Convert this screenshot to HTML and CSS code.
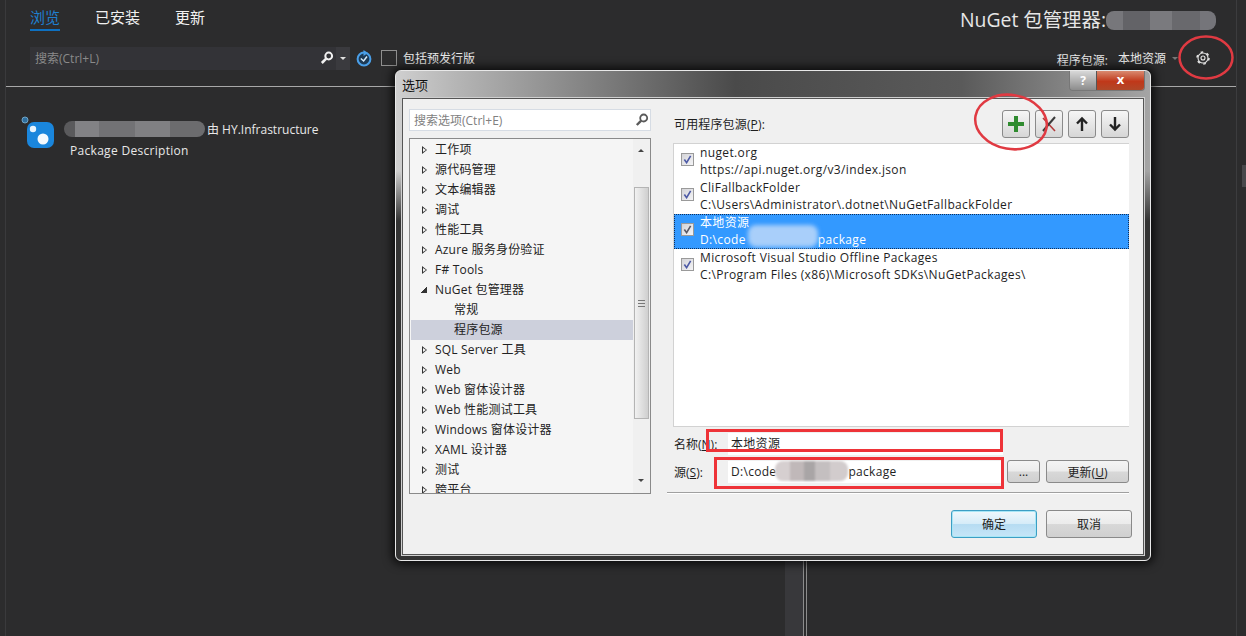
FILE: index.html
```html
<!DOCTYPE html>
<html lang="zh-CN">
<head>
    <meta charset="UTF-8">
    <title>NuGet 包管理器</title>
    <link rel="stylesheet" href="styles.css">
</head>
<body>
    <div class="side-line"></div>
    <div class="right-line"></div>
    <div class="right-thumb"></div>

    <main class="manager">
        <header class="top-row">
            <nav class="tabs">
                <a class="tab active">浏览</a>
                <a class="tab">已安装</a>
                <a class="tab">更新</a>
            </nav>
            <h1 class="title">NuGet 包管理器:<span class="smudge title-smudge"></span></h1>
        </header>

        <div class="toolbar">
            <div class="search">
                <span class="search-hint">搜索(Ctrl+L)</span>
                <svg class="search-icon" width="14" height="14" viewBox="0 0 14 14"><circle cx="8.7" cy="5" r="3.4" fill="none" stroke="#f1f1f1" stroke-width="2"/><path d="M6.2 7.6 1.8 12" stroke="#f1f1f1" stroke-width="2.6"/></svg>
                <span class="search-drop"></span>
            </div>
            <svg class="refresh" width="16" height="18" viewBox="0 0 16 18"><circle cx="8" cy="10" r="6.4" fill="#1d3a55" stroke="#4a9fe8" stroke-width="2"/><path d="M7.500 1 12 4 7.500 7Z" fill="#4a9fe8"/><path d="M4.800 9.500 7.600 12 11 7.500" fill="none" stroke="#d8ecfb" stroke-width="1.500"/></svg>
            <span class="pre-box"></span>
            <span class="pre-label">包括预发行版</span>
            <div class="source-picker">
                <span class="source-label">程序包源:</span>
                <span class="source-value">本地资源</span>
                <span class="source-drop"></span>
                <svg class="gear" width="16" height="16" viewBox="0 0 16 16"><circle cx="8" cy="8" r="5" fill="none" stroke="#e6e6e6" stroke-width="1.100"/><circle cx="8" cy="8" r="6" fill="none" stroke="#e6e6e6" stroke-width="1.500" stroke-dasharray="2.600 3.680"/><circle cx="8" cy="8" r="2" fill="none" stroke="#e6e6e6" stroke-width="1.100"/></svg>
            </div>
        </div>

        <section class="package">
            <svg class="package-icon" width="34" height="34" viewBox="0 0 34 34">
                <circle cx="4" cy="4" r="3" fill="#2f6f9f" stroke="#6fa5c8"/>
                <rect x="6" y="6" width="27" height="26" rx="7" fill="#1a86dc"/>
                <circle cx="12" cy="13" r="3.200" fill="#e8f4fd"/>
                <circle cx="22" cy="23" r="5.500" fill="#f4fafe"/>
            </svg>
            <div class="package-text">
                <div class="package-name"><span class="smudge name-smudge"></span>由 HY.Infrastructure</div>
                <div class="package-desc">Package Description</div>
            </div>
        </section>
    </main>

    <div class="split-bar"></div>

    <div class="dialog">
        <div class="dialog-title">
            <span class="dialog-name">选项</span>
            <div class="window-buttons">
                <span class="help-btn">?</span>
                <span class="close-btn">x</span>
            </div>
        </div>
        <div class="dialog-body">
            <div class="left-pane">
                <div class="option-search">
                    <span>搜索选项(Ctrl+E)</span>
                    <svg width="14" height="14" viewBox="0 0 14 14"><circle cx="8.700" cy="5" r="3.500" fill="none" stroke="#5a5a5a" stroke-width="1.800"/><path d="M6.200 7.600 1.800 12" stroke="#5a5a5a" stroke-width="2.400"/></svg>
                </div>
                <div class="tree">
                    <ul class="tree-list">
                        <li class="tree-row"><i class="arrow"></i>工作项</li>
                        <li class="tree-row"><i class="arrow"></i>源代码管理</li>
                        <li class="tree-row"><i class="arrow"></i>文本编辑器</li>
                        <li class="tree-row"><i class="arrow"></i>调试</li>
                        <li class="tree-row"><i class="arrow"></i>性能工具</li>
                        <li class="tree-row"><i class="arrow"></i>Azure 服务身份验证</li>
                        <li class="tree-row"><i class="arrow"></i>F# Tools</li>
                        <li class="tree-row"><i class="arrow open"></i>NuGet 包管理器</li>
                        <li class="tree-row child">常规</li>
                        <li class="tree-row child selected">程序包源</li>
                        <li class="tree-row"><i class="arrow"></i>SQL Server 工具</li>
                        <li class="tree-row"><i class="arrow"></i>Web</li>
                        <li class="tree-row"><i class="arrow"></i>Web 窗体设计器</li>
                        <li class="tree-row"><i class="arrow"></i>Web 性能测试工具</li>
                        <li class="tree-row"><i class="arrow"></i>Windows 窗体设计器</li>
                        <li class="tree-row"><i class="arrow"></i>XAML 设计器</li>
                        <li class="tree-row"><i class="arrow"></i>测试</li>
                        <li class="tree-row"><i class="arrow"></i>跨平台</li>
                    </ul>
                    <div class="scrollbar">
                        <span class="scroll-up"></span>
                        <span class="scroll-thumb"><b></b></span>
                        <span class="scroll-down"></span>
                    </div>
                </div>
            </div>

            <div class="right-pane">
                <div class="sources-head">
                    <span>可用程序包源(<u>P</u>):</span>
                    <div class="tool-buttons">
                        <button class="tool-btn"><svg width="20" height="20" viewBox="0 0 20 20"><path d="M8 2h4v6h6v4h-6v6H8v-6H2V8h6z" fill="#2f8b2f"/></svg></button>
                        <button class="tool-btn"><svg width="18" height="18" viewBox="0 0 18 18"><path d="M3 3 15 16" stroke="#b23a3a" stroke-width="1.600"/><path d="M15 2 3 16" stroke="#3a3a3a" stroke-width="2"/></svg></button>
                        <button class="tool-btn"><svg width="16" height="18" viewBox="0 0 16 18"><path d="M8 16V4M3 8.500 8 3.500 13 8.500" fill="none" stroke="#222" stroke-width="2.400"/></svg></button>
                        <button class="tool-btn"><svg width="16" height="18" viewBox="0 0 16 18"><path d="M8 2v12M3 9.500 8 14.500 13 9.500" fill="none" stroke="#222" stroke-width="2.400"/></svg></button>
                    </div>
                </div>

                <ul class="source-list">
                    <li class="source-row">
                        <span class="check"><svg width="9" height="9" viewBox="0 0 10 10"><path d="M1.500 5 4 8.500 8.500 1" fill="none" stroke="#4d5aa6" stroke-width="1.800"/></svg></span>
                        <div class="source-text"><div>nuget.org</div><div>https://api.nuget.org/v3/index.json</div></div>
                    </li>
                    <li class="source-row">
                        <span class="check"><svg width="9" height="9" viewBox="0 0 10 10"><path d="M1.500 5 4 8.500 8.500 1" fill="none" stroke="#4d5aa6" stroke-width="1.800"/></svg></span>
                        <div class="source-text"><div>CliFallbackFolder</div><div>C:\Users\Administrator\.dotnet\NuGetFallbackFolder</div></div>
                    </li>
                    <li class="source-row current">
                        <span class="check"><svg width="9" height="9" viewBox="0 0 10 10"><path d="M1.500 5 4 8.500 8.500 1" fill="none" stroke="#5a5a66" stroke-width="1.800"/></svg></span>
                        <div class="source-text"><div>本地资源</div><div class="smudge-line">D:\code<span class="smudge light-smudge"></span>package</div></div>
                    </li>
                    <li class="source-row">
                        <span class="check"><svg width="9" height="9" viewBox="0 0 10 10"><path d="M1.500 5 4 8.500 8.500 1" fill="none" stroke="#4d5aa6" stroke-width="1.800"/></svg></span>
                        <div class="source-text"><div>Microsoft Visual Studio Offline Packages</div><div>C:\Program Files (x86)\Microsoft SDKs\NuGetPackages\</div></div>
                    </li>
                </ul>

                <div class="field-row name-row">
                    <label class="field-label">名称(<u>N</u>):</label>
                    <div class="field-input">本地资源</div>
                </div>
                <div class="field-row">
                    <label class="field-label">源(<u>S</u>):</label>
                    <div class="field-input">D:\code<span class="smudge grey-smudge"></span>package</div>
                    <button class="btn dots-btn">...</button>
                    <button class="btn update-btn">更新(<u>U</u>)</button>
                </div>
                <div class="divider"></div>
                <div class="dialog-actions">
                    <button class="btn action-btn primary">确定</button>
                    <button class="btn action-btn">取消</button>
                </div>
            </div>
        </div>
    </div>

    <!-- red annotations drawn on top of the screenshot -->
    <svg class="marks" width="1246" height="636" viewBox="0 0 1246 636">
        <ellipse cx="1206" cy="57.500" rx="26.500" ry="21" fill="none" stroke="#e03a42" stroke-width="2.500"/>
        <ellipse cx="1011" cy="122" rx="36" ry="27" fill="none" stroke="#e03a42" stroke-width="2.500" transform="rotate(10 1011 122)"/>
        <rect x="707.500" y="430.500" width="294" height="20" fill="none" stroke="#ee3338" stroke-width="3"/>
        <rect x="715.500" y="458.500" width="287" height="29" fill="none" stroke="#ee3338" stroke-width="3"/>
    </svg>
</body>
</html>
```

FILE: styles.css
```css
* {
    margin: 0;
    padding: 0;
    box-sizing: border-box;
}

body {
    width: 1246px;
    height: 636px;
    position: relative;
    overflow: hidden;
    background: #2c2c2d;
    color: #e8e8e8;
    font-family: "Open Sans", "Noto Sans CJK SC", sans-serif;
    font-size: 12px;
}

ul {
    list-style: none;
}

/* blurred-out bits of the screenshot */
.smudge {
    display: inline-block;
    vertical-align: middle;
    border-radius: 8px;
    filter: blur(0.6px);
}

.side-line {
    position: absolute;
    left: 5px;
    top: 0;
    width: 1px;
    height: 636px;
    background: #3a3a3c;
}

.right-line {
    position: absolute;
    left: 1236px;
    top: 0;
    width: 1px;
    height: 636px;
    background: #3c3c3e;
}

.right-thumb {
    position: absolute;
    left: 1242px;
    top: 165px;
    width: 4px;
    height: 22px;
    background: #48484b;
}

.split-bar {
    position: absolute;
    left: 785px;
    top: 556px;
    width: 22px;
    height: 80px;
    background: linear-gradient(90deg, #38383b 0 18px, #8c8c8c 18px 19px, #2c2c2d 19px 21px, #8c8c8c 21px 22px);
}

.manager {
    padding: 0 10px 0 30px;
}

.top-row {
    display: flex;
    justify-content: space-between;
    align-items: flex-start;
    height: 46px;
}

.tabs {
    display: flex;
    gap: 35px;
    font-size: 15px;
    line-height: 20px;
    padding-top: 7px;
}

.tab {
    height: 24px;
    color: #f1f1f1;
}

.tab.active {
    color: #1f7fcf;
    border-bottom: 2px solid #0e70c0;
}

.title {
    font-size: 19.400px;
    font-weight: 400;
    line-height: 26px;
    padding-top: 7px;
    padding-right: 20px;
    color: #e6e6e6;
    display: flex;
    align-items: center;
}

.title-smudge {
    width: 110px;
    height: 19px;
    background: linear-gradient(90deg, #77777b 0 15%, #636367 15% 40%, #7a7a7e 40% 60%, #69696d 60% 85%, #75757a 85%);
}

.toolbar {
    display: flex;
    align-items: center;
    height: 24px;
}

.search {
    width: 320px;
    height: 23px;
    background: #333337;
    display: flex;
    align-items: center;
    padding-left: 5px;
    color: #8a8a8a;
}

.search-hint {
    flex: 1;
}

.search-icon {
    margin-right: 2px;
}

.search-drop {
    width: 14px;
    height: 23px;
    background: #3a3a3e;
    position: relative;
}

.search-drop::after,
.source-drop::after {
    content: "";
    position: absolute;
    left: 4px;
    top: 10px;
    border: 3px solid transparent;
    border-top: 3px solid #e0e0e0;
}

.refresh {
    margin-left: 6px;
}

.pre-box {
    width: 16px;
    height: 16px;
    margin-left: 9px;
    border: 1px solid #8f8f8f;
}

.pre-label {
    margin-left: 6px;
    color: #e8e8e8;
}

.source-picker {
    margin-left: auto;
    display: flex;
    align-items: center;
    padding-right: 25px;
    height: 24px;
}

.source-label {
    margin-top: 3px;
}

.source-value {
    margin-left: 10px;
    margin-bottom: 1px;
}

.source-drop {
    width: 29px;
    height: 16px;
    position: relative;
}

.source-drop::after {
    left: 6px;
    top: 7px;
    border-top-color: #777;
}

.package {
    display: flex;
    margin-top: 16px;
    border-top: 1px solid #a8a8a8;
    margin-left: -25px;
    padding-left: 16px;
    padding-top: 29px;
}

.package-icon {
    flex: none;
}

.package-text {
    margin-left: 9px;
    margin-top: 3px;
}

.package-name {
    display: flex;
    align-items: center;
    height: 20px;
}

.name-smudge {
    width: 141px;
    height: 16px;
    margin-right: 2px;
    background: linear-gradient(90deg, #5a5a5c 0 8%, #828285 8% 25%, #727275 25% 50%, #808083 50% 75%, #6c6c6e 75%);
}

.package-desc {
    margin-left: 6px;
    margin-top: 3px;
    line-height: 18px;
    letter-spacing: 0.3px;
}

/* the options window floats over the manager */
.dialog {
    position: absolute;
    left: 395px;
    top: 70px;
    width: 756px;
    height: 491px;
    padding: 0 6px 5px;
    border: 1px solid #e8e8e8;
    border-radius: 6px;
    background:
        linear-gradient(rgba(51, 51, 51, 0) 0 100px, #333 150px),
        linear-gradient(90deg, #cfcfcf 0, #b5b5b5 8%, #4a4a4a 45%, #5a5a5a 75%, #a5a5a5 100%);
    box-shadow: 0 0 10px 3px rgba(0, 0, 0, 0.75);
    color: #1e1e1e;
    display: flex;
    flex-direction: column;
}

.dialog-title {
    height: 27px;
    flex: none;
    display: flex;
    justify-content: space-between;
}

.dialog-name {
    font-size: 13px;
    line-height: 28px;
    color: #111;
}

.window-buttons {
    display: flex;
    height: 20px;
    margin-right: -1px;
    border: 1px solid #777;
    border-top: 0;
    border-radius: 0 0 4px 4px;
    overflow: hidden;
}

.help-btn {
    width: 27px;
    background: linear-gradient(#d8d8d8, #8c8c8c);
    font-weight: 700;
    text-align: center;
    color: #fff;
    line-height: 19px;
    border-right: 1px solid #555;
}

.close-btn {
    width: 47px;
    background: linear-gradient(#d98a70, #c0381a 55%, #b04828);
    font-weight: 700;
    font-size: 13px;
    text-align: center;
    color: #fff;
    line-height: 17px;
}

.dialog-body {
    flex: 1;
    display: flex;
    background: #f0f0f0;
    border: 1px solid #555;
    outline: 1px solid #cfcfcf;
    padding: 10px 0 0 6px;
}

.left-pane {
    width: 242px;
    flex: none;
}

.option-search {
    height: 22px;
    background: #fff;
    border: 1px solid #d6dce4;
    display: flex;
    align-items: center;
    justify-content: space-between;
    padding: 0 1px 0 4px;
    color: #808080;
}

.tree {
    display: flex;
    height: 356px;
    margin-top: 7px;
    border: 1px solid #8a8a8a;
    background: #f5f5f5;
    overflow: hidden;
}

.tree-list {
    flex: 1;
    padding: 1px 0 0 1px;
}

.tree-row {
    height: 20px;
    line-height: 20px;
    display: flex;
    align-items: center;
    padding-left: 10px;
    color: #222;
    letter-spacing: 0.2px;
}

.tree-row.child {
    padding-left: 43px;
}

.tree-row.selected {
    background: #cdd0dc;
}

.arrow {
    width: 0;
    height: 0;
    margin-right: 8px;
    margin-left: 1px;
    border-left: 5px solid #333;
    border-top: 4px solid transparent;
    border-bottom: 4px solid transparent;
    position: relative;
}

.arrow::after {
    content: "";
    position: absolute;
    left: -4px;
    top: -2px;
    border-left: 3px solid #f5f5f5;
    border-top: 2px solid transparent;
    border-bottom: 2px solid transparent;
}

.arrow.open {
    border: 0;
    width: 6px;
    height: 6px;
    margin-right: 8px;
    margin-left: 0;
    background: linear-gradient(135deg, transparent 50%, #333 50%);
}

.arrow.open::after {
    display: none;
}

.scrollbar {
    width: 17px;
    flex: none;
    position: relative;
    background: #f0f0f0;
    display: flex;
    flex-direction: column;
    padding-top: 48px;
}

.scroll-up,
.scroll-down {
    position: absolute;
    left: 5px;
    border: 3px solid transparent;
}

.scroll-up {
    top: 7px;
    border-bottom: 3px solid #444;
}

.scroll-down {
    top: 340px;
    border-top: 3px solid #444;
}

.scroll-thumb {
    width: 15px;
    height: 232px;
    margin-left: 1px;
    background: linear-gradient(90deg, #f1f1f1, #cfcfcf);
    border: 1px solid #b4b4b4;
    display: flex;
    align-items: center;
    justify-content: center;
}

.scroll-thumb b {
    width: 7px;
    height: 7px;
    background: repeating-linear-gradient(#777 0 1px, transparent 1px 3px);
}

.right-pane {
    flex: 1;
    margin-left: 23px;
    padding-right: 17px;
}

.sources-head {
    display: flex;
    justify-content: space-between;
    align-items: center;
    height: 29px;
    letter-spacing: 0.15px;
}

.tool-buttons {
    display: flex;
    gap: 5px;
}

.tool-btn {
    width: 28px;
    height: 28px;
    background: linear-gradient(#f6f6f6, #d6d6d6);
    border: 1px solid #8a8a8a;
    border-radius: 3px;
    display: flex;
    align-items: center;
    justify-content: center;
}

.source-list {
    height: 284px;
    margin-top: 5px;
    margin-left: -1px;
    background: #fff;
    border: 1px solid #d2d2d2;
    border-right: 0;
}

.source-row {
    height: 35px;
    display: flex;
    align-items: center;
    padding-left: 7px;
    line-height: 17px;
    letter-spacing: 0.36px;
    color: #1e1e1e;
}

.source-text {
    margin-bottom: 2px;
}

.source-row.current {
    background: #3399ff;
    color: #fff;
    outline: 1px dotted #10305c;
    outline-offset: -1px;
}

.check {
    width: 13px;
    height: 13px;
    flex: none;
    margin-right: 6px;
    margin-bottom: 5px;
    background: linear-gradient(135deg, #d4d4d8, #f4f4f6);
    border: 1px solid #9a9a9a;
    display: flex;
    align-items: center;
    justify-content: center;
}

.smudge-line {
    display: flex;
    align-items: center;
    height: 17px;
}

.light-smudge {
    width: 70px;
    height: 22px;
    margin: -6px 0 0 2px;
    background: #a9cffa;
    filter: blur(2px);
}

.field-row {
    display: flex;
    align-items: center;
    height: 23px;
    margin-top: 5px;
}

.field-label {
    width: 54px;
    flex: none;
}

.field-input {
    width: 275px;
    height: 22px;
    line-height: 22px;
    padding-left: 3px;
    background: #fff;
    flex: none;
    letter-spacing: 0.3px;
}

.grey-smudge {
    width: 73px;
    height: 20px;
    margin: -2px 0 0 -1px;
    background: linear-gradient(90deg, #d6cfd0 0 20%, #c0b8b9 20% 40%, #a9a5a6 40% 55%, #c4bfc0 55% 75%, #d2cccd 75%);
    filter: blur(1px);
}

.btn {
    font-family: inherit;
    font-size: 12px;
    color: #1e1e1e;
    background: linear-gradient(#f4f4f4 0, #ececec 48%, #d8d8d8 52%, #d0d0d0 100%);
    border: 1px solid #8a8a8a;
    border-radius: 3px;
}

.dots-btn {
    width: 33px;
    height: 23px;
    margin-left: 4px;
}

.update-btn {
    width: 83px;
    height: 23px;
    margin-left: 6px;
}

.divider {
    height: 1px;
    background: #a0a0a0;
    box-shadow: 0 1px 0 #fff;
    margin: 9px 0 0 -7px;
}

.dialog-actions {
    display: flex;
    gap: 9px;
    margin-top: 17px;
    margin-left: 277px;
    margin-right: -3px;
}

.action-btn {
    width: 86px;
    height: 28px;
}

.action-btn.primary {
    border-color: #3c9ec4;
    box-shadow: inset 0 0 0 1px #a8e6f6;
    background: linear-gradient(#f0f8fc 0, #d6ecf8 48%, #b6dcf2 52%, #c6e6f8 100%);
}

.marks {
    position: absolute;
    left: 0;
    top: 0;
    pointer-events: none;
}
```
